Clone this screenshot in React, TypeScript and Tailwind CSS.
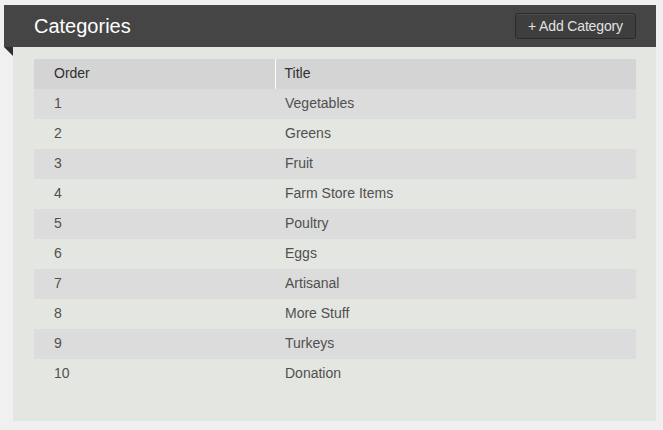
import React from "react";

const rows = [
  [1, "Vegetables"],
  [2, "Greens"],
  [3, "Fruit"],
  [4, "Farm Store Items"],
  [5, "Poultry"],
  [6, "Eggs"],
  [7, "Artisanal"],
  [8, "More Stuff"],
  [9, "Turkeys"],
  [10, "Donation"],
] as const;

export default function App() {
  return (
    <div
      className="w-[663px] h-[430px] bg-[#f0f0f0] pt-[5px] overflow-hidden"
      style={{ fontFamily: '"Liberation Sans", Arial, sans-serif' }}
    >
      <div className="relative ml-[4px] w-[652px] h-[42px] bg-[#454545] flex items-center justify-between pl-[30px] pr-[20px]">
        <h1 className="text-[20px] text-white leading-none">Categories</h1>
        <button className="h-[26px] w-[121px] rounded-[3px] border border-[#2a2a2a] bg-[#3e3e3e] text-[14px] tracking-[-0.15px] text-[#e2e2e2] leading-none shadow-[inset_0_1px_0_rgba(255,255,255,0.08)]">
          + Add Category
        </button>
        <svg className="absolute left-0 top-[42px]" width="9" height="9" viewBox="0 0 9 9">
          <polygon points="0,0 9,0 9,9" fill="#2e2e2e" />
        </svg>
      </div>
      <div className="ml-[13px] w-[643px] h-[374px] bg-[#e4e6e1] pt-[12px] pl-[21px] pr-[20px]">
        <table className="w-[602px] border-collapse text-[14px]">
          <thead>
            <tr className="bg-[#d4d4d4] h-[30px]">
              <th className="w-[241px] text-left font-normal text-[#2f2f2f] pl-[20px] pb-[2px] border-r border-white">
                Order
              </th>
              <th className="text-left font-normal text-[#2f2f2f] pl-[9px] pb-[2px]">Title</th>
            </tr>
          </thead>
          <tbody>
            {rows.map(([n, t], i) => (
              <tr key={n} className={`h-[30px] ${i % 2 === 0 ? "bg-[#dcdcdc]" : "bg-transparent"}`}>
                <td className="pl-[20px] pb-[2px] text-[#505050]">{n}</td>
                <td className="pl-[10px] pb-[2px] text-[#505050]">{t}</td>
              </tr>
            ))}
          </tbody>
        </table>
      </div>
    </div>
  );
}
